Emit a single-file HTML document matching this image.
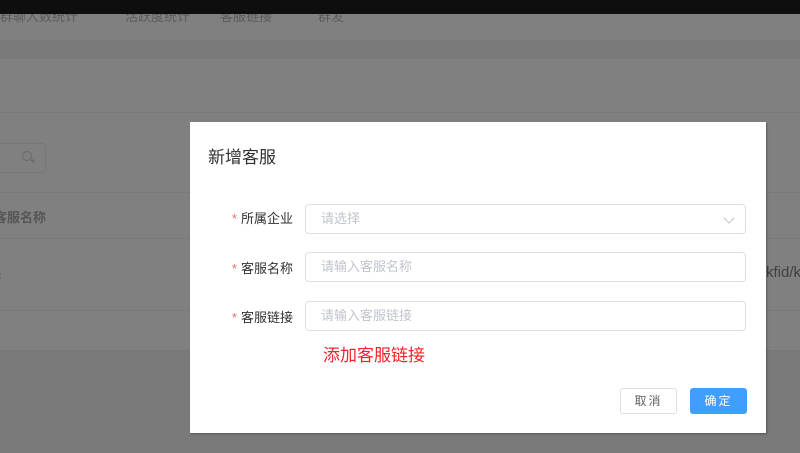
<!DOCTYPE html>
<html><head><meta charset="utf-8"><style>
*{margin:0;padding:0;box-sizing:border-box}
body{width:800px;height:453px;overflow:hidden;background:#7a7a7a;font-family:"Liberation Sans","Noto Sans CJK SC",sans-serif;position:relative}
.a{position:absolute}
.lbl{position:absolute;font-size:13px;color:#303133;text-align:right;width:120px;left:173px}
.lbl b{color:#f56c6c;font-weight:normal;margin-right:4px}
.inp{position:absolute;left:305px;width:441px;height:30px;border:1px solid #dcdfe6;border-radius:4px;font-size:13px;color:#c0c4cc;padding:6px 15px;line-height:16px}
</style></head><body>
<div class="a" style="left:0;top:0;width:800px;height:14px;background:#0e0e0e"></div>
<div class="a" style="left:0;top:14px;width:800px;height:26px;background:#808080;font-size:13px;color:#5a5a5a;overflow:hidden"><span class="a" style="left:0;top:-8px">群聊人数统计</span><span class="a" style="left:125px;top:-8px">活跃度统计</span><span class="a" style="left:220px;top:-8px">客服链接</span><span class="a" style="left:318px;top:-8px">群发</span></div>
<div class="a" style="left:0;top:40px;width:800px;height:19px;background:#7a7a7a"></div>
<div class="a" style="left:0;top:59px;width:800px;height:53px;background:#808080"></div>
<div class="a" style="left:0;top:112px;width:800px;height:238px;background:#808080;border-top:1px solid #7a7a7a"></div>
<div class="a" style="left:-10px;top:143px;width:56px;height:30px;border:1px solid #777;border-radius:4px"></div>
<div class="a" style="left:22px;top:151px;width:10px;height:10px;border:1.5px solid #6a6a6a;border-radius:50%"></div>
<div class="a" style="left:31px;top:160px;width:4px;height:1.5px;background:#6a6a6a;transform:rotate(45deg)"></div>
<div class="a" style="left:0;top:192px;width:800px;height:1px;background:#7a7a7a"></div>
<div class="a" style="left:-6px;top:207px;font-size:13px;font-weight:bold;color:#555">客服名称</div>
<div class="a" style="left:0;top:238px;width:800px;height:1px;background:#7a7a7a"></div>
<div class="a" style="left:-6px;top:267px;font-size:14px;color:#404040">c</div>
<div class="a" style="left:766px;top:264px;font-size:15px;color:#404040">kfid/k</div>
<div class="a" style="left:0;top:310px;width:800px;height:1px;background:#7a7a7a"></div>
<div class="a" style="left:0;top:350px;width:800px;height:1px;background:#777"></div>

<div class="a" style="left:190px;top:122px;width:576px;height:311px;background:#fff;box-shadow:1px 1px 2px rgba(0,0,0,.3)">
<div class="a" style="left:18px;top:21px;font-size:17px;color:#303133">新增客服</div>
</div>
<div class="lbl" style="top:208px"><b>*</b>所属企业</div>
<div class="inp" style="top:204px">请选择<span class="a" style="right:12px;top:9px;width:8px;height:8px;border-right:1px solid #c0c4cc;border-bottom:1px solid #c0c4cc;transform:rotate(45deg)"></span></div>
<div class="lbl" style="top:258px"><b>*</b>客服名称</div>
<div class="inp" style="top:252px">请输入客服名称</div>
<div class="lbl" style="top:307px"><b>*</b>客服链接</div>
<div class="inp" style="top:301px">请输入客服链接</div>
<div class="a" style="left:323px;top:341px;font-size:17px;color:#f5222d">添加客服链接</div>
<div class="a" style="left:620px;top:388px;width:57px;height:26px;border:1px solid #dcdfe6;border-radius:3px;font-size:12px;color:#606266;text-align:center;line-height:24px;letter-spacing:2px">取消</div>
<div class="a" style="left:690px;top:388px;width:57px;height:26px;background:#409eff;border-radius:3px;font-size:12px;color:#fff;text-align:center;line-height:26px;letter-spacing:2px">确定</div>
</body></html>
